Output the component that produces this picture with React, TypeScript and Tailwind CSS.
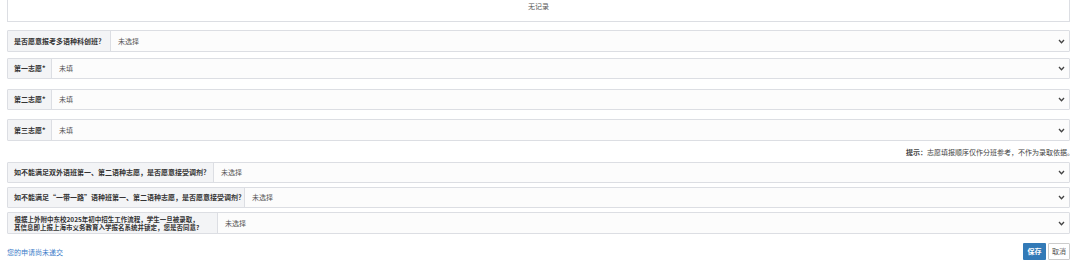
import React from 'react';

const font = { fontFamily: '"Noto Sans CJK SC", "Noto Sans", sans-serif' };

type Row = { label: React.ReactNode; value: string; labelW: string; gap: string; h?: string };

const Chevron = () => (
  <svg width="7" height="5" viewBox="0 0 8 6" className="text-[#444]">
    <path d="M1 1.2 L4 4.4 L7 1.2" fill="none" stroke="currentColor" strokeWidth="1.6" />
  </svg>
);

function FieldRow({ label, value, labelW, gap, h = 'h-[21px]' }: Row) {
  return (
    <div className={`flex ${h} ${gap} border border-[#dcdee3] rounded-[1px] bg-[#fcfcfc]`}>
      <div
        className={`${labelW} shrink-0 flex items-center pl-[6px] bg-[#f3f4f6] border-r border-[#dcdee3] font-bold text-[#333] text-[7px] whitespace-nowrap`}
      >
        {label}
      </div>
      <div className="flex-1 flex items-center justify-between pl-[7px] pr-[4px] text-[7px] text-[#555]">
        <span>{value}</span>
        <Chevron />
      </div>
    </div>
  );
}

export default function App() {
  return (
    <div className="w-[1080px] h-[269px] bg-white overflow-hidden pl-[7px] pr-[10px]" style={font}>
      <div className="h-[22px] border border-t-0 border-[#dcdee3] flex justify-center pt-[1px] text-[7px] text-[#555]">
        无记录
      </div>

      <FieldRow gap="mt-[8px]" h="h-[22px]" labelW="w-[103px]" label="是否愿意报考多语种科创班?" value="未选择" />
      <FieldRow gap="mt-[6px]" labelW="w-[44px]" label="第一志愿*" value="未填" />
      <FieldRow gap="mt-[10px]" labelW="w-[44px]" label="第二志愿*" value="未填" />
      <FieldRow gap="mt-[9px]" h="h-[22px]" labelW="w-[44px]" label="第三志愿*" value="未填" />

      <div className="flex justify-end mt-[6px] mr-[-4px] text-[7px] text-[#444] leading-[10px]">
        <span className="font-bold">提示：</span>
        <span>志愿填报顺序仅作分班参考，不作为录取依据。</span>
      </div>

      <FieldRow gap="mt-[5px]" labelW="w-[206px]" label="如不能满足双外语班第一、第二语种志愿，是否愿意接受调剂?" value="未选择" />
      <FieldRow gap="mt-[4px]" labelW="w-[237px]" label="如不能满足“一带一路”语种班第一、第二语种志愿，是否愿意接受调剂?" value="未选择" />
      <FieldRow
        gap="mt-[4px]"
        h="h-[22px]"
        labelW="w-[210px]"
        label={
          <span className="flex flex-col items-center text-[6.5px] leading-[8.5px] pr-[4px]">
            <span>根据上外附中东校2025年初中招生工作流程，学生一旦被录取，</span>
            <span>其信息即上报上海市义务教育入学报名系统并锁定，您是否同意?</span>
          </span>
        }
        value="未选择"
      />

      <div className="flex items-start justify-between mt-[9px]">
        <span className="text-[7px] text-[#3a7bc8] mt-[4px]">您的申请尚未递交</span>
        <div className="flex gap-[2px]">
          <button className="w-[23px] h-[17px] bg-[#337ab7] text-white text-[7px] font-bold rounded-[1px]">保存</button>
          <button className="w-[22px] h-[17px] bg-white border border-[#ccc] text-[#555] text-[7px] rounded-[1px]">取消</button>
        </div>
      </div>
    </div>
  );
}
